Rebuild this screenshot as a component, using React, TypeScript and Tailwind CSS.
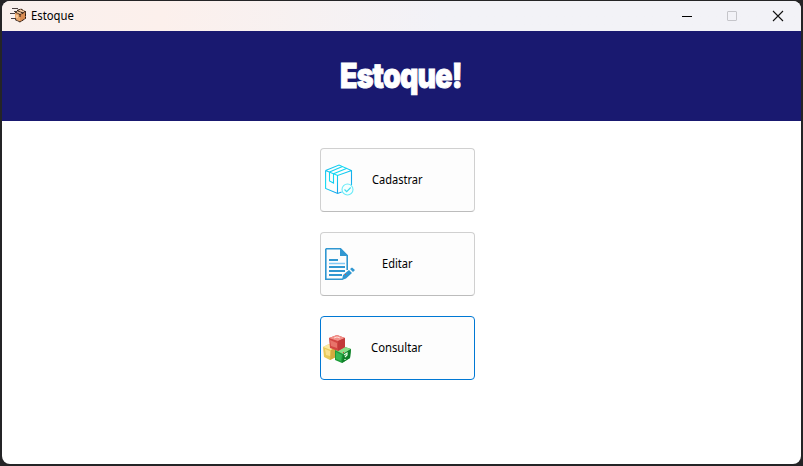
import type { ReactNode } from 'react';

function BoxLogo() {
  return (
    <svg width="18" height="16" viewBox="0 0 18 16" className="shrink-0">
      <path d="M5 4 11 1 16 3.500V10L10 14 5 11.500Z" fill="#e8a66c" />
      <path d="m5 4 6-3 5 2.500-6 3Z" fill="#f6caa0" />
      <path d="m10 6.500 6-3V10l-6 4Z" fill="#d98c52" />
      <path d="M2 .500h6M4 3.500h3M0 5.500h5M1 10.500h5" stroke="#4a4040" />
      <path d="M5 4l5 2.500 6-3M7 2.500l6 2.500M10 6.500V9M5 11.500l5 2.500 5.500-3.500V4L11 1 7 2.500" fill="none" stroke="#2b1a12" strokeWidth="1" strokeDasharray="3 .6" />
      <path d="M7 7v3" stroke="#ffe2bd" />
    </svg>
  );
}

function PackageIcon() {
  return (
    <svg width="30" height="32" viewBox="0 0 30 32" fill="none" strokeWidth="1.100">
      <defs>
        <linearGradient id="box" x1="0" y1="0" x2="30" y2="32" gradientUnits="userSpaceOnUse">
          <stop stopColor="#16b4ee" />
          <stop offset=".35" stopColor="#10dcf2" />
          <stop offset=".65" stopColor="#14a4ec" />
          <stop offset="1" stopColor="#2fe4f4" />
        </linearGradient>
      </defs>
      <g stroke="url(#box)">
        <path d="M.600 6.500 14 1l12.500 5.500V21M.600 6.500v18l12 5 4-1.500M.600 6.500l12 5 14-5M12.500 11.500v18" />
        <path d="m4.500 8 13-5.500M8.500 9.800l13.500-5.500M4.500 8v9l4 2V9.800" />
      </g>
      <circle cx="22.500" cy="25.500" r="5.500" fill="#f5ffff" stroke="#6aebf8" />
      <path d="m19.500 25.500 2.200 2.200 4-4.200" stroke="#43dbed" strokeWidth="1.200" />
    </svg>
  );
}

function EditIcon() {
  return (
    <svg width="30" height="33" viewBox="0 0 30 33" fill="none">
      <path d="M.8.800H15.500L22.200 7.500V22M.8.800v30.400h17" stroke="#3097d1" strokeWidth="1.600" />
      <path d="M15 0v8h8Z" fill="#3097d1" />
      <path d="M4 12h9M4 19h16M4 23h16M4 27h13" stroke="#3097d1" strokeWidth="2" />
      <path d="M4 15.500h16" stroke="#83c9f5" strokeWidth="1.500" />
      <path d="m17 32 1-5 6-5 3 3-6 5.500ZM25 21l2-1.500 3 2.500-2 2Z" fill="#3097d1" />
      <path d="m20 27 1-1" stroke="#e15038" />
    </svg>
  );
}

function CubesIcon() {
  return (
    <svg width="29" height="28" viewBox="0 0 29 28">
      <path d="M0 12 6 9l7 3v10l-6 3-6-3Z" fill="#e8c957" />
      <path d="m0 12 6-3 7 3-5 3Z" fill="#fbe9a3" />
      <path d="m8 15 5-3v10l-6 3Z" fill="#d3aa3f" />
      <path d="m2 14 5 2v5l-4-1Z" fill="#f9e08c" />
      <path d="m12 15 7-4 9 3-1 9-8 5-7-3Z" fill="#1d9b39" />
      <path d="m12 15 7-4 9 3-8 5Z" fill="#8ade89" />
      <path d="m20 19 8-5-1 9-8 5Z" fill="#12802b" />
      <path d="m13 17 6 3-1 6-5-2Z" fill="#36b955" />
      <path d="m21 20 3-2v2l-2 2m0 2v1" fill="none" stroke="#e8ffe7" strokeWidth="1.200" />
      <path d="m6 3 8-3 8 3v9l-7 4-8-3Z" fill="#d44643" />
      <path d="m6 3 8-3 8 3-7 3Z" fill="#f2918a" />
      <path d="m15 6 7-3v9l-7 4Z" fill="#c23a3a" />
      <path d="m7 5 7 3v5l-6-2Z" fill="#e8736a" />
      <path d="m11 3 3-1 3 1" fill="none" stroke="#ffdad3" />
      <path d="M20 17h1v1h-1Z" fill="#d7372e" />
    </svg>
  );
}

function MenuButton({ label, icon, iconClass, labelClass, active = false }: {
  label: string;
  icon: ReactNode;
  iconClass: string;
  labelClass: string;
  active?: boolean;
}) {
  return (
    <button className={`flex h-16 w-[155px] items-start rounded-[4px] border bg-[#fdfdfd] text-left ${active ? 'border-[#0078d4]' : 'border-[#d0d0d0] border-b-[#bcbcbc]'}`}>
      <span className={`w-8 shrink-0 ${iconClass}`}>{icon}</span>
      <span className={`mt-[23px] origin-left whitespace-nowrap text-[12px] leading-4 text-black ${labelClass}`}>{label}</span>
    </button>
  );
}

export default function App() {
  return (
    <div className="h-[466px] w-[803px] overflow-hidden bg-[#242426] pl-[2px] pr-[2px] pt-px pb-[2px] font-['Noto_Sans','Open_Sans',sans-serif]">
      <main className="flex h-[463px] flex-col overflow-hidden rounded-[8px] bg-white">
        <header className="flex h-[30px] shrink-0 items-center bg-linear-to-r from-[#f9f0ed] from-0% via-[#fcf0ec] via-20% to-[#f2f2f7] to-55% pl-2">
          <BoxLogo />
          <span className="ml-[3px] origin-left scale-x-[.94] text-[12px] leading-4 text-black">Estoque</span>
          <svg width="102" height="12" viewBox="0 0 102 12" className="ml-auto mr-[17px]" fill="none">
            <path d="M0 6.500h10" stroke="#000" />
            <rect x="45.500" y="1.500" width="9" height="9" rx=".5" stroke="#c5c5ca" />
            <path d="m91 1 10 10M101 1 91 11" stroke="#111" strokeWidth="1.100" />
          </svg>
        </header>
        <section className="flex h-[90px] shrink-0 items-center bg-[#191970] pl-[338px]">
          <h1 className="origin-left scale-x-[.84] whitespace-nowrap font-['Impact','Inter',sans-serif] text-[34px] font-black leading-none tracking-[-1px] text-white [-webkit-text-stroke:0.9px_#fff]">Estoque!</h1>
        </section>
        <nav className="ml-[318px] mt-[27px] flex flex-col gap-5">
          <MenuButton label="Cadastrar" icon={<PackageIcon />} iconClass="ml-1 mt-[15px]" labelClass="ml-[15px] scale-x-[.92]" />
          <MenuButton label="Editar" icon={<EditIcon />} iconClass="ml-1 mt-[15px]" labelClass="ml-[25px] scale-x-[.92]" />
          <MenuButton label="Consultar" icon={<CubesIcon />} iconClass="ml-[2px] mt-[18px]" labelClass="ml-4 scale-x-[.94]" active />
        </nav>
      </main>
    </div>
  );
}
